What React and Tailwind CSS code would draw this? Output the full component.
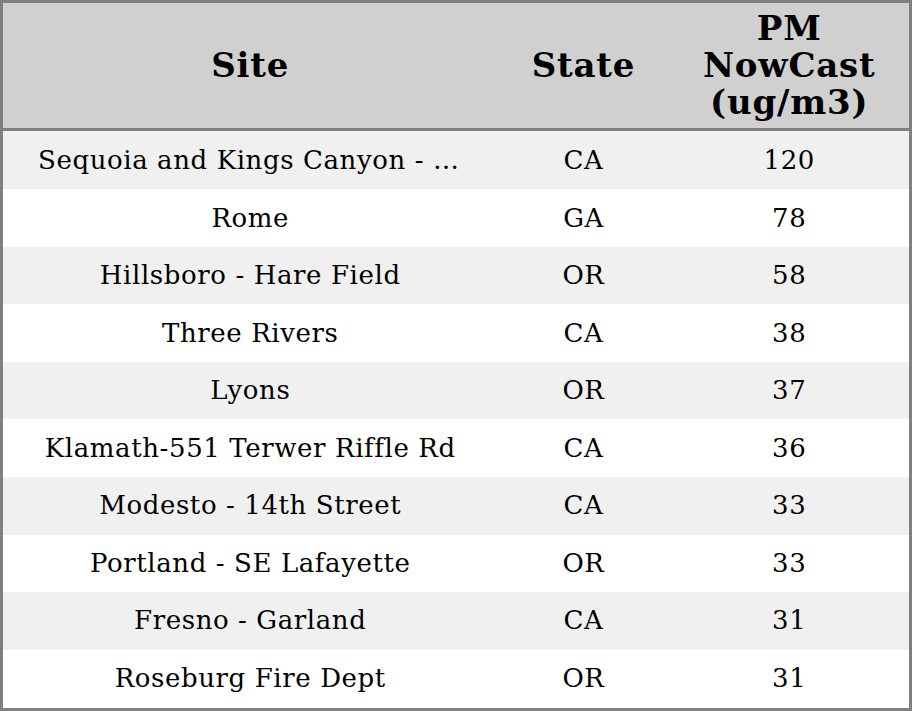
const ROWS = [
  ['Sequoia and Kings Canyon - Ash Mountain', 'CA', 120],
  ['Rome', 'GA', 78],
  ['Hillsboro - Hare Field', 'OR', 58],
  ['Three Rivers', 'CA', 38],
  ['Lyons', 'OR', 37],
  ['Klamath-551 Terwer Riffle Rd', 'CA', 36],
  ['Modesto - 14th Street', 'CA', 33],
  ['Portland - SE Lafayette', 'OR', 33],
  ['Fresno - Garland', 'CA', 31],
  ['Roseburg Fire Dept', 'OR', 31],
]

export default function App() {
  return (
    <div className="w-[912px] h-[711px] bg-white" style={{ fontFamily: '"DejaVu Serif", serif' }}>
      <table className="w-full h-full table-fixed border-collapse border-[3px] border-[#808080] text-black">
        <colgroup>
          <col className="w-[496px]" />
          <col className="w-[172px]" />
          <col />
        </colgroup>
        <thead>
          <tr className="bg-[#d0d0d0] h-[128px] border-b-[3px] border-[#808080] text-[34px] leading-[37px] tracking-[0.8px] font-bold">
            <th>Site</th>
            <th>State</th>
            <th>PM<br />NowCast<br />(ug/m3)</th>
          </tr>
        </thead>
        <tbody className="text-[26px] tracking-[0.6px]">
          {ROWS.map(([site, state, pm], i) => (
            <tr key={site} className={i % 2 === 0 ? 'bg-[#f0f0f0]' : 'bg-white'}>
              <td className="text-center px-[35px] truncate">{site}</td>
              <td className="text-center">{state}</td>
              <td className="text-center">{pm}</td>
            </tr>
          ))}
        </tbody>
      </table>
    </div>
  )
}
